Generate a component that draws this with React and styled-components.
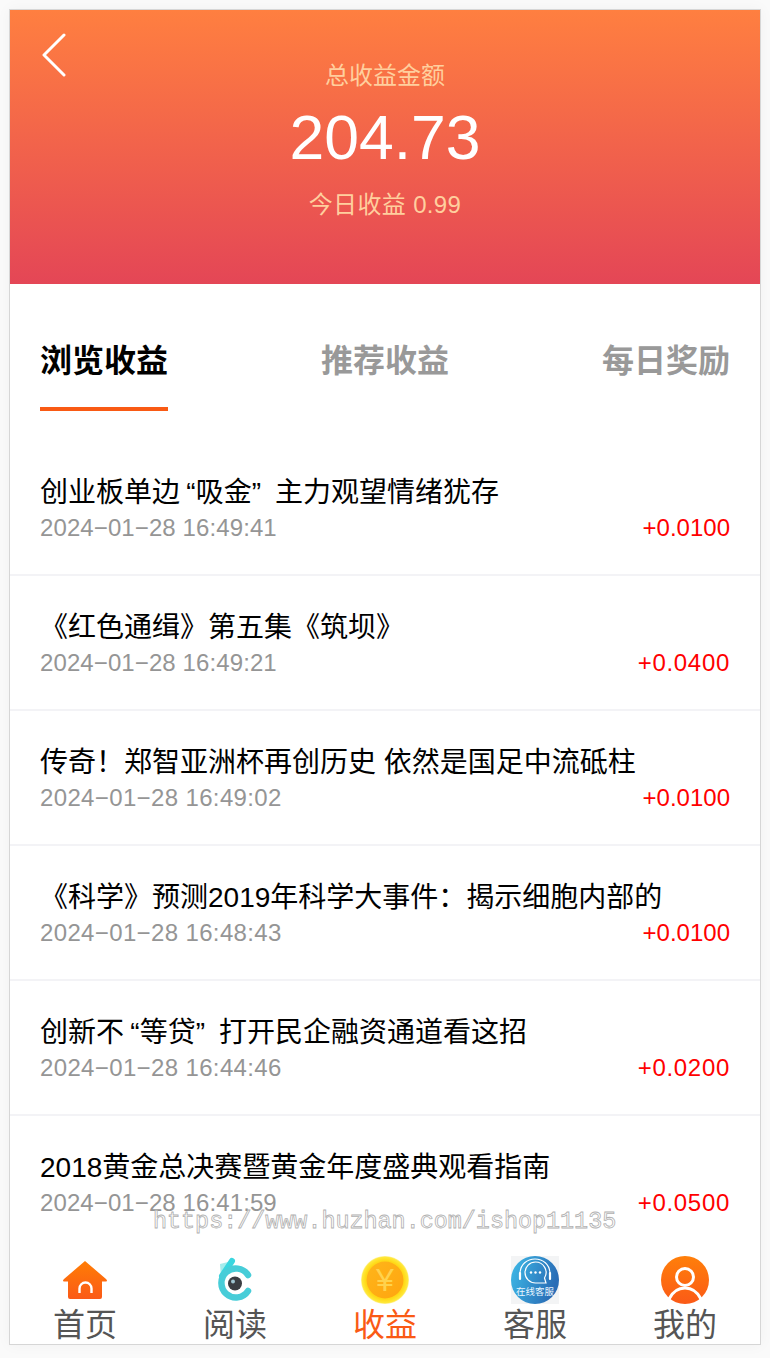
import React from 'react';
import styled, { createGlobalStyle } from 'styled-components';

const GlobalStyle = createGlobalStyle`
    html, body {
        margin: 0;
        padding: 0;
        background-color: #fafafa;
    }
    body {
        overflow: hidden;
        font-family: "Liberation Sans", "Noto Sans CJK SC", sans-serif;
    }
    * {
        box-sizing: border-box;
    }
`;

const records = [
    { title: '创业板单边“吸金” 主力观望情绪犹存', time: '2024−01−28 16:49:41', amount: '+0.0100' },
    { title: '《红色通缉》第五集《筑坝》', time: '2024−01−28 16:49:21', amount: '+0.0400' },
    { title: '传奇！郑智亚洲杯再创历史 依然是国足中流砥柱', time: '2024−01−28 16:49:02', amount: '+0.0100' },
    { title: '《科学》预测2019年科学大事件：揭示细胞内部的', time: '2024−01−28 16:48:43', amount: '+0.0100' },
    { title: '创新不“等贷” 打开民企融资通道看这招', time: '2024−01−28 16:44:46', amount: '+0.0200' },
    { title: '2018黄金总决赛暨黄金年度盛典观看指南', time: '2024−01−28 16:41:59', amount: '+0.0500' }
];

// the digit 1 is narrow in the original font, so strings with fewer of them run wider
const countOnes = text => text.split('1').length - 1;

// curly quotes take a wider slot next to chinese text
const withQuotes = title => title.split(/([“”])/).map((part, i) => (
    part === '“' || part === '”'
        ? <Quote key={i} $open={part === '“'}>{part}</Quote>
        : part
));

const HomeIcon = () => (
    <svg width="48" height="48" viewBox="0 0 48 48">
        <defs>
            <linearGradient id="homeFill" x1="0" y1="0" x2="0" y2="1">
                <stop offset="0" stopColor="#ff7d05" />
                <stop offset="1" stopColor="#fb5a17" />
            </linearGradient>
        </defs>
        <path d="M24 5 L45 23 Q47 25 45 25.500 L41 25.500 L41 41 Q41 43 39 43 L9 43 Q7 43 7 41 L7 25.500 L3 25.500 Q1 25 3 23 Z" fill="url(#homeFill)" />
        <path d="M18.500 37 L18.500 32.500 A6 6 0 0 1 30.500 32.500 L30.500 37" fill="none" stroke="#fff" strokeWidth="2.400" />
    </svg>
);

const EyeIcon = () => (
    <svg width="48" height="48" viewBox="0 0 48 48">
        <path d="M9 8 L17 6 L17 17 L10 22 Z" fill="#a5ecec" />
        <path d="M11 20 L21 5" fill="none" stroke="#3ad6df" strokeWidth="6" strokeLinecap="round" />
        <path d="M37 19 A14.500 14.500 0 1 0 37 35" fill="none" stroke="#48cdd8" strokeWidth="6.500" strokeLinecap="round" />
        <circle cx="24" cy="27.500" r="7" fill="#3a3d42" />
        <circle cx="22" cy="25.500" r="2" fill="#9fc4d0" />
    </svg>
);

const CoinIcon = () => (
    <svg width="48" height="48" viewBox="0 0 48 48">
        <defs>
            <radialGradient id="coinRim" cx="0.500" cy="0.500" r="0.500">
                <stop offset="0.800" stopColor="#ffd916" />
                <stop offset="0.950" stopColor="#ffe83a" />
                <stop offset="1" stopColor="#fff2a0" />
            </radialGradient>
            <linearGradient id="coinFace" x1="0" y1="0" x2="1" y2="1">
                <stop offset="0" stopColor="#ffb51a" />
                <stop offset="1" stopColor="#ffa50f" />
            </linearGradient>
        </defs>
        <circle cx="24" cy="24" r="24" fill="url(#coinRim)" />
        <circle cx="24" cy="24" r="18.500" fill="url(#coinFace)" />
        <text x="24" y="35" textAnchor="middle" fontSize="32" fontFamily="Liberation Sans, sans-serif" fill="#ffd24d">¥</text>
    </svg>
);

const ServiceIcon = () => (
    <svg width="48" height="48" viewBox="0 0 48 48">
        <defs>
            <linearGradient id="serviceFill" x1="0" y1="0" x2="1" y2="0.300">
                <stop offset="0" stopColor="#3ebbe8" />
                <stop offset="1" stopColor="#2a6db6" />
            </linearGradient>
        </defs>
        <rect width="48" height="48" fill="#f3f4f5" />
        <circle cx="24" cy="24" r="24" fill="url(#serviceFill)" />
        <path d="M9 18 C9 -2 39 -2 39 18" fill="none" stroke="#fff" strokeWidth="1.100" />
        <path d="M9 17 L9 23 M39 17 L39 23" stroke="#fff" strokeWidth="2.200" strokeLinecap="round" />
        <path d="M24.500 6 A10.500 10.500 0 1 0 24.500 27 L35 27 L33.500 22 A10.500 10.500 0 0 0 24.500 6 Z" fill="none" stroke="#fff" strokeWidth="1.200" />
        <circle cx="20" cy="16.500" r="1.200" fill="#fff" />
        <circle cx="24.500" cy="16.500" r="1.200" fill="#fff" />
        <circle cx="29" cy="16.500" r="1.200" fill="#fff" />
        <text x="24" y="39" textAnchor="middle" fontSize="9.500" fontFamily="Noto Sans CJK SC, sans-serif" fill="#e8f6ff">在线客服</text>
    </svg>
);

const UserIcon = () => (
    <svg width="48" height="48" viewBox="0 0 48 48">
        <defs>
            <linearGradient id="userFill" x1="0" y1="0" x2="0" y2="1">
                <stop offset="0" stopColor="#ff7f0a" />
                <stop offset="1" stopColor="#fb5a17" />
            </linearGradient>
        </defs>
        <circle cx="24" cy="24" r="24" fill="url(#userFill)" />
        <circle cx="24" cy="21" r="8.500" fill="none" stroke="#fff" strokeWidth="3" />
        <path d="M8 43 C12 35 18 32 24 32 C30 32 36 35 40 43" fill="none" stroke="#fff" strokeWidth="3" />
    </svg>
);

const navItems = [
    { label: '首页', icon: <HomeIcon /> },
    { label: '阅读', icon: <EyeIcon /> },
    { label: '收益', icon: <CoinIcon />, active: true },
    { label: '客服', icon: <ServiceIcon /> },
    { label: '我的', icon: <UserIcon /> }
];

const App = () => {
    return (
        <>
            <GlobalStyle />
            <Frame>
                <Header>
                    <BackButton viewBox="0 0 26 44">
                        <path d="M22 2 L2 22 L22 42" fill="none" stroke="#fff" strokeWidth="3" strokeLinecap="round" strokeLinejoin="round" />
                    </BackButton>
                    <HeaderLabel>总收益金额</HeaderLabel>
                    <Total>204.73</Total>
                    <Today>今日收益 0.99</Today>
                </Header>
                <Tabs>
                    <Tab $active>浏览收益</Tab>
                    <Tab>推荐收益</Tab>
                    <Tab>每日奖励</Tab>
                </Tabs>
                <List>
                    {records.map(record => (
                        <Row key={record.time}>
                            <Title>{withQuotes(record.title)}</Title>
                            <Meta>
                                <Time $wide={countOnes(record.time) < 3}>{record.time}</Time>
                                <Amount $wide={countOnes(record.amount) === 0}>{record.amount}</Amount>
                            </Meta>
                        </Row>
                    ))}
                </List>
                <Watermark>https://www.huzhan.com/ishop11135</Watermark>
                <Nav>
                    {navItems.map(item => (
                        <NavItem key={item.label} $active={item.active}>
                            {item.icon}
                            <span>{item.label}</span>
                        </NavItem>
                    ))}
                </Nav>
            </Frame>
        </>
    );
};

const Frame = styled.div`
    position: relative;
    display: flex;
    flex-direction: column;
    width: 752px;
    height: 1336px;
    margin: 9px;
    background-color: #fff;
    border: 1px solid #d6d6d6;
    box-shadow: 0 0 14px rgba(0, 0, 0, .04);
    overflow: hidden;
`;

const Header = styled.div`
    position: relative;
    display: flex;
    flex-direction: column;
    align-items: center;
    flex-shrink: 0;
    height: 274px;
    padding-top: 49px;
    background: linear-gradient(180deg, #ff7f40 0%, #e44656 100%);
`;

const BackButton = styled.svg`
    position: absolute;
    top: 23px;
    left: 32px;
    width: 26px;
    height: 44px;
`;

const HeaderLabel = styled.div`
    font-size: 24px;
    line-height: 34px;
    color: #ffcf9e;
`;

const Total = styled.div`
    font-size: 62.5px;
    line-height: 88px;
    color: #fff;
`;

const Today = styled.div`
    margin-top: 7px;
    font-size: 24px;
    line-height: 34px;
    letter-spacing: .35px;
    color: #ffcf9e;
`;

const Tabs = styled.div`
    display: flex;
    justify-content: space-between;
    flex-shrink: 0;
    height: 127px;
    padding: 0 30px;
`;

const Tab = styled.div`
    height: 127px;
    padding-top: 54px;
    font-size: 32px;
    line-height: 46px;
    font-weight: 700;
    color: ${props => props.$active ? '#000' : '#999'};
    border-bottom: 4px solid ${props => props.$active ? '#f95a14' : 'transparent'};
`;

const List = styled.div`
    flex: 1;
    min-height: 0;
    margin-top: 30px;
    overflow: hidden;
`;

const Row = styled.div`
    height: 135px;
    padding: 33px 30px 0;
    border-bottom: 2px solid #f3f3f6;
`;

const Title = styled.div`
    font-size: 28px;
    line-height: 38px;
    color: #000;
    white-space: nowrap;
`;

const Quote = styled.span`
    ${props => props.$open ? 'padding-left: 6.3px;' : 'padding-right: 6.3px;'}
`;

const Meta = styled.div`
    display: flex;
    justify-content: space-between;
    align-items: center;
    height: 32px;
`;

const Time = styled.span`
    font-size: 24px;
    letter-spacing: ${props => props.$wide ? '.36px' : '.1px'};
    color: #959595;
`;

const Amount = styled.span`
    font-size: 24px;
    letter-spacing: ${props => props.$wide ? '.7px' : '0'};
    color: #f00;
`;

const Watermark = styled.div`
    position: absolute;
    left: 143px;
    top: 1196px;
    font-family: "Liberation Mono", monospace;
    font-size: 23.4px;
    line-height: 32px;
    color: rgba(255, 255, 255, .7);
    -webkit-text-stroke: .8px #b0b0b0;
    white-space: nowrap;
    z-index: 2;
`;

const Nav = styled.div`
    display: grid;
    grid-template-columns: repeat(5, 1fr);
    flex-shrink: 0;
    height: 99px;
    padding-top: 11px;
    background-color: #fff;
`;

const NavItem = styled.div`
    display: flex;
    flex-direction: column;
    align-items: center;
    font-size: 32px;
    line-height: 42px;
    color: ${props => props.$active ? '#fa5a14' : '#555'};

    svg {
        display: block;
        flex-shrink: 0;
    }
`;

export default App;
